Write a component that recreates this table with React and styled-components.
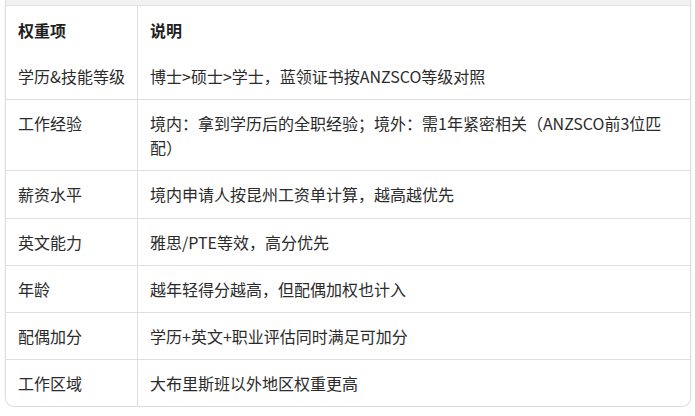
import React from 'react';
import styled, { createGlobalStyle } from 'styled-components';

const GlobalStyle = createGlobalStyle`
  body {
    margin: 0;
    background: #fff;
    font-family: "Noto Sans CJK SC", "Noto Sans", sans-serif;
  }
`

const Frame = styled.div`
  width: 684px;
  margin-left: 5px;
  border: 1px solid #dcdcdc;
  border-top: none;
  border-radius: 0 0 9px 9px;
  overflow: hidden;
  box-shadow: 0 1px 3px rgba(0, 0, 0, 0.06);
`

const TopStrip = styled.div`
  height: 5px;
  background: #f1f1f1;
  border-bottom: 1px solid #e2e2e2;
`

const Table = styled.table`
  width: 100%;
  border-collapse: collapse;
  color: #2b2b2b;
  font-size: 16px;
  line-height: 24px;
`

const Cell = styled.td`
  padding: ${p => (p.$head ? '12px 12px 11px' : '11px 12px 11.2px')};
  border-bottom: 1px solid #dedede;
  vertical-align: top;
  text-align: left;
  font-weight: ${p => (p.$head ? 700 : 400)};
  color: ${p => (p.$head ? '#1f1f1f' : 'inherit')};
  width: ${p => (p.$first ? '107px' : 'auto')};
  border-right: ${p => (p.$first ? '1px solid #dedede' : 'none')};
  tr:last-child > & {
    border-bottom: none;
  }
`

const rows = [
  ['学历&技能等级', '博士>硕士>学士，蓝领证书按ANZSCO等级对照'],
  ['工作经验', '境内：拿到学历后的全职经验；境外：需1年紧密相关（ANZSCO前3位匹配）'],
  ['薪资水平', '境内申请人按昆州工资单计算，越高越优先'],
  ['英文能力', '雅思/PTE等效，高分优先'],
  ['年龄', '越年轻得分越高，但配偶加权也计入'],
  ['配偶加分', '学历+英文+职业评估同时满足可加分'],
  ['工作区域', '大布里斯班以外地区权重更高'],
]

const App = () => {
  return (
    <>
      <GlobalStyle />
      <Frame>
        <TopStrip />
        <Table>
          <thead>
            <tr>
              <Cell as="th" $head $first>权重项</Cell>
              <Cell as="th" $head>说明</Cell>
            </tr>
          </thead>
          <tbody>
            {rows.map(([k, v]) => (
              <tr key={k}>
                <Cell $first>{k}</Cell>
                <Cell>{v}</Cell>
              </tr>
            ))}
          </tbody>
        </Table>
      </Frame>
    </>
  )
}

export default App
